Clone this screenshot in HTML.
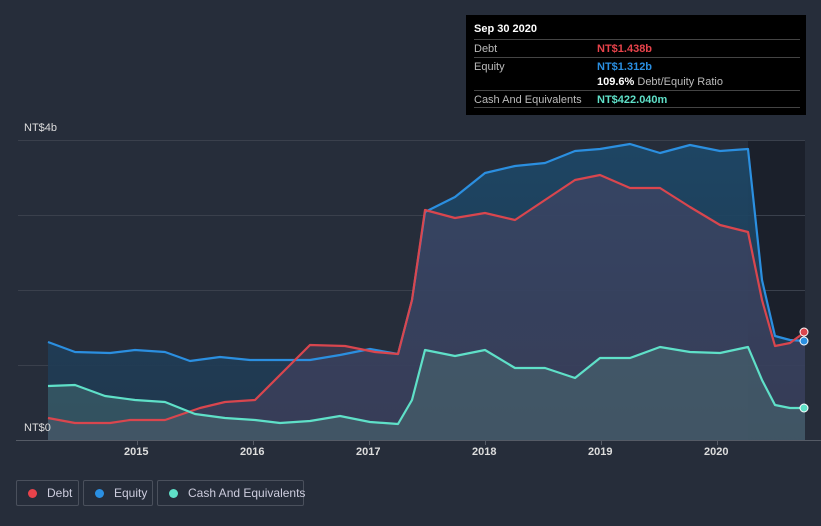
<html><head><style>
html,body{margin:0;background:#262d3a;width:821px;height:526px;overflow:hidden;font-family:"Liberation Sans",sans-serif;position:relative}
.tt{position:absolute;left:466px;top:15px;width:340px;height:100px;background:#000;color:#bbb;font-size:11px}
.tt .r{position:absolute;left:8px;right:6px;border-top:1px solid #444;height:18px;line-height:18px}
.tt b{color:#fff}
.v{position:absolute;left:123px;font-weight:bold;white-space:nowrap}
.lg{position:absolute;top:480px;height:26px;border:1px solid #4a505c;border-radius:2px;color:#ccd;font-size:12px;line-height:24px;box-sizing:border-box;white-space:nowrap}
.lg i{display:inline-block;width:9px;height:9px;border-radius:50%;margin:0 10px 0 11px;vertical-align:-1px}
.ax{position:absolute;top:446px;color:#ddd;font-size:11px;font-weight:bold}
</style></head><body>
<svg width="821" height="526" style="position:absolute;left:0;top:0">
<defs>
<linearGradient id="ge" x1="0" y1="0" x2="0" y2="1"><stop offset="0" stop-color="#1d4868"/><stop offset="1" stop-color="#20384f"/></linearGradient>
</defs>
<rect x="748" y="140" width="57" height="300" fill="#1b202b"/>
<g stroke="#3a404c" stroke-width="1"><line x1="18" y1="140.5" x2="805" y2="140.5"/><line x1="18" y1="215.5" x2="805" y2="215.5"/><line x1="18" y1="290.5" x2="805" y2="290.5"/><line x1="18" y1="365.5" x2="805" y2="365.5"/></g>
<polygon fill="url(#ge)" opacity="0.9" points="48,440 48,342 75,352 110,353 135,350 165,352 190,361 220,357 250,360 310,360 340,355 370,349 398,354 412,300 425,212 455,197 485,173 515,166 545,163 575,151 600,149 630,144 660,153 690,145 720,151 748,149 762,280 775,336 790,340 805,341 805,440"/>
<polygon fill="#5a4566" opacity="0.4" points="48,440 48,418 75,423 110,423 130,420 165,420 200,408 225,402 255,400 280,375 310,345 345,346 375,352 398,354 412,300 425,210 455,218 485,213 515,220 545,200 575,180 600,175 630,188 660,188 690,207 720,225 748,232 762,300 775,346 790,343 805,332 805,440"/>
<polygon fill="#4f7a7a" opacity="0.4" points="48,440 48,386 75,385 105,396 135,400 165,402 195,414 225,418 255,420 280,423 310,421 340,416 370,422 398,424 412,400 425,350 455,356 485,350 515,368 545,368 575,378 600,358 630,358 660,347 690,352 720,353 748,347 762,380 775,405 790,408 805,408 805,440"/>
<g fill="none" stroke-width="2.2" stroke-linejoin="round">
<polyline stroke="#2b8fe0" points="48,342 75,352 110,353 135,350 165,352 190,361 220,357 250,360 310,360 340,355 370,349 398,354 412,300 425,212 455,197 485,173 515,166 545,163 575,151 600,149 630,144 660,153 690,145 720,151 748,149 762,280 775,336 790,340 805,341"/>
<polyline stroke="#d9464e" points="48,418 75,423 110,423 130,420 165,420 200,408 225,402 255,400 280,375 310,345 345,346 375,352 398,354 412,300 425,210 455,218 485,213 515,220 545,200 575,180 600,175 630,188 660,188 690,207 720,225 748,232 762,300 775,346 790,343 805,332"/>
<polyline stroke="#5fe0c8" points="48,386 75,385 105,396 135,400 165,402 195,414 225,418 255,420 280,423 310,421 340,416 370,422 398,424 412,400 425,350 455,356 485,350 515,368 545,368 575,378 600,358 630,358 660,347 690,352 720,353 748,347 762,380 775,405 790,408 805,408"/>
</g>
<line x1="16" y1="440.5" x2="821" y2="440.5" stroke="#555b66"/>
<g stroke="#555b66"><line x1="137.5" y1="440" x2="137.5" y2="445"/><line x1="253.5" y1="440" x2="253.5" y2="445"/><line x1="369.5" y1="440" x2="369.5" y2="445"/><line x1="485.5" y1="440" x2="485.5" y2="445"/><line x1="601.5" y1="440" x2="601.5" y2="445"/><line x1="717.5" y1="440" x2="717.5" y2="445"/></g>
<circle cx="804" cy="332" r="4" fill="#d9464e" stroke="#fff"/>
<circle cx="804" cy="341" r="4" fill="#2b8fe0" stroke="#fff"/>
<circle cx="804" cy="408" r="4" fill="#5fe0c8" stroke="#fff"/>
</svg>
<div style="position:absolute;left:24px;top:122px;color:#ddd;font-size:11px">NT$4b</div>
<div style="position:absolute;left:24px;top:422px;color:#ddd;font-size:11px">NT$0</div>
<div class="ax" style="left:124px">2015</div><div class="ax" style="left:240px">2016</div><div class="ax" style="left:356px">2017</div><div class="ax" style="left:472px">2018</div><div class="ax" style="left:588px">2019</div><div class="ax" style="left:704px">2020</div>
<div class="tt">
<div style="position:absolute;left:8px;top:8px;color:#fff;font-weight:bold;font-size:11px">Sep 30 2020</div>
<div class="r" style="top:24px">Debt<span class="v" style="color:#e8434b">NT$1.438b</span></div>
<div class="r" style="top:42px">Equity<span class="v" style="color:#2a8fe2">NT$1.312b</span></div>
<div class="r" style="top:58px;border:0"><span class="v" style="font-weight:normal"><b>109.6%</b> Debt/Equity Ratio</span></div>
<div class="r" style="top:75px">Cash And Equivalents<span class="v" style="color:#5fe0c8">NT$422.040m</span></div>
<div class="r" style="top:92px;height:0"></div>
</div>
<div class="lg" style="left:16px;width:63px"><i style="background:#e8434b"></i>Debt</div>
<div class="lg" style="left:83px;width:70px"><i style="background:#2a8fe2"></i>Equity</div>
<div class="lg" style="left:157px;width:147px"><i style="background:#5fe0c8"></i>Cash And Equivalents</div>
</body></html>
